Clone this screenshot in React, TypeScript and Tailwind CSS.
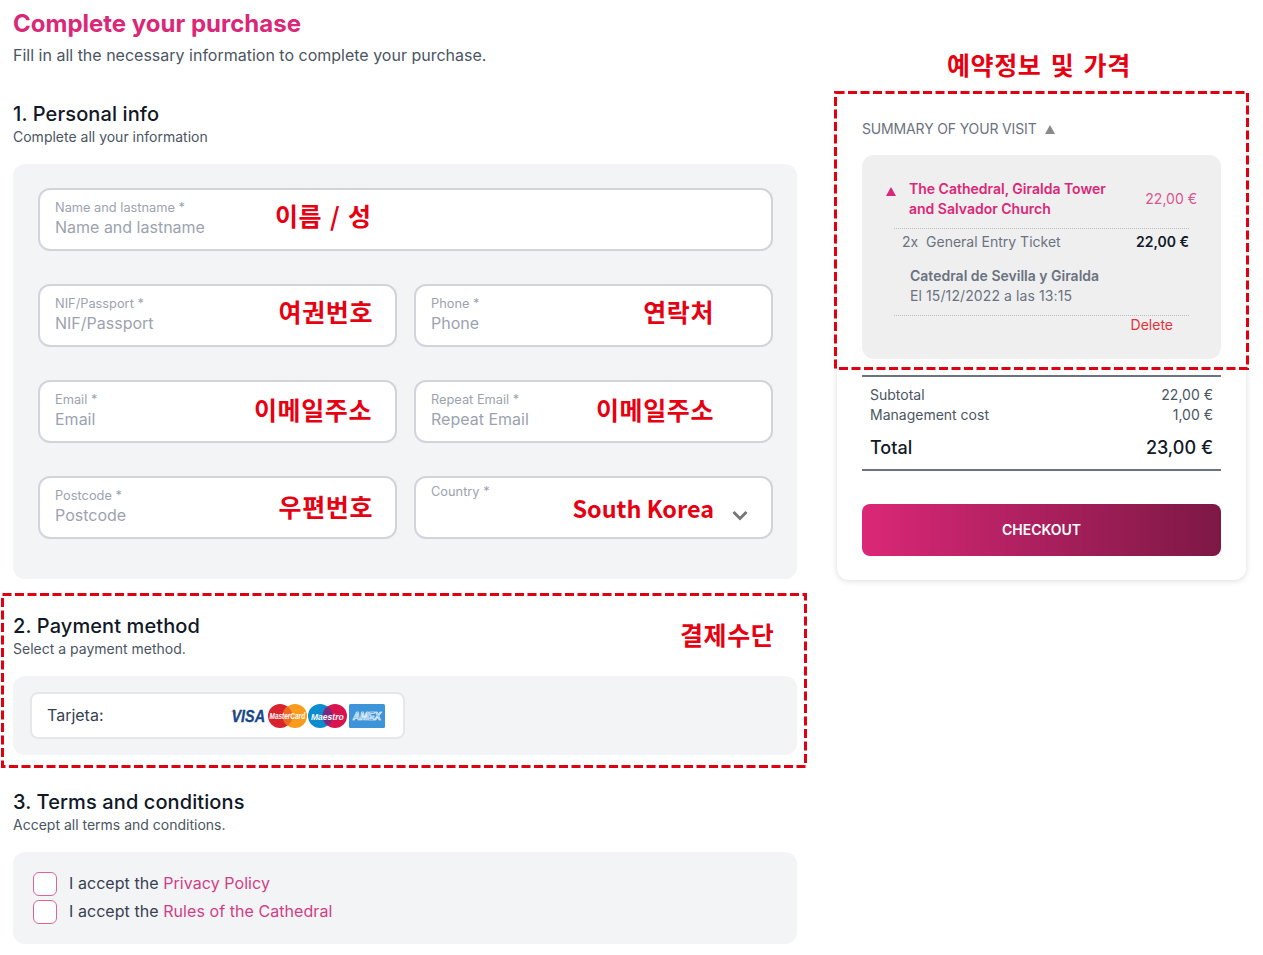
// Checkout page with the red review notes laid over it
const sans = 'font-["Inter","Noto_Sans_CJK_KR",sans-serif]'

function Note({ children, className }: { children: React.ReactNode; className: string }) {
  return (
    <span className={`absolute font-["Noto_Sans_CJK_KR",sans-serif] font-bold text-[#e60012] text-[25px] leading-[32px] tracking-[0.6px] whitespace-nowrap ${className}`}>
      {children}
    </span>
  )
}

function Field({ label, note, noteClass, className = '' }: { label: string; note: string; noteClass: string; className?: string }) {
  return (
    <div className={`relative h-[63px] bg-white border-2 border-[#d1d5db] rounded-xl px-[15px] pt-[9px] ${className}`}>
      <p className="text-[12.8px] leading-[17px] text-[#9ca3af]">{label} *</p>
      <p className="text-base leading-[22px] text-[#9ca3af]">{label}</p>
      <Note className={noteClass}>{note}</Note>
    </div>
  )
}

function CardLogos() {
  return (
    <div className="flex items-center">
      <svg width="36" height="24" viewBox="0 0 36 24">
        <path d="M0 7c3 .5 5 2 6.500 4.500l-1-4.500z" fill="#f7a823" />
        <text transform="translate(1.500 18) scale(0.9 1)" fontFamily="Liberation Sans" fontWeight="700" fontStyle="italic" fontSize="16" fill="#17478a" stroke="#17478a" strokeWidth="0.300">VISA</text>
      </svg>
      <svg width="39" height="24" viewBox="0 0 39 24" className="ml-[2px]">
        <circle cx="12" cy="12" r="12" fill="#d9232e" />
        <circle cx="27" cy="12" r="12" fill="#f99b1c" />
        <path d="M19.500 2.300a12 12 0 0 1 0 19.400a12 12 0 0 1 0-19.400z" fill="#ee6a23" />
        <text transform="translate(1.500 15) scale(0.72 1)" fontFamily="Liberation Sans" fontWeight="700" fontStyle="italic" fontSize="9" fill="#fff">MasterCard</text>
      </svg>
      <svg width="39" height="24" viewBox="0 0 39 24" className="ml-[1px]">
        <circle cx="12" cy="12" r="12" fill="#0b8ccf" />
        <circle cx="27" cy="12" r="12" fill="#d8144f" />
        <path d="M19.500 2.300a12 12 0 0 1 0 19.400a12 12 0 0 1 0-19.400z" fill="#7a2a7e" />
        <text transform="translate(3 15.500) scale(0.9 1)" fontFamily="Liberation Sans" fontWeight="700" fontStyle="italic" fontSize="9.500" fill="#fff">Maestro</text>
      </svg>
      <svg width="36" height="24" viewBox="0 0 36 24" className="ml-[2px]">
        <rect width="36" height="24" rx="1.500" fill="#3d94d8" />
        <text transform="translate(4 16) scale(0.88 1)" fontFamily="Liberation Sans" fontWeight="700" fontStyle="italic" fontSize="11" fill="#3d94d8" stroke="#fff" strokeWidth="0.700">AMEX</text>
      </svg>
    </div>
  )
}

function Heading({ title, sub }: { title: string; sub: string }) {
  return (
    <>
      <h2 className="mt-[33px] text-xl leading-7 font-medium tracking-[0.1px] text-[#111827]">{title}</h2>
      <p className="text-sm leading-5 text-[#4b5563] -mt-px">{sub}</p>
    </>
  )
}

function Check({ link }: { link: string }) {
  return (
    <div className="flex items-center h-6 gap-3">
      <span className="w-6 h-6 bg-white border border-[#d9669b] rounded-md" />
      <p className="text-base leading-6 tracking-[0.06px] text-[#374151] -mt-0.5">
        I accept the <span className="text-[#d03f85]">{link}</span>
      </p>
    </div>
  )
}

function Summary() {
  return (
    <div className="w-[409px] h-[488px] bg-white rounded-xl shadow-[0_1px_6px_rgba(0,0,0,0.14)] px-[25px] pt-[27px]">
      <div className="flex items-center gap-2 h-5">
        <p className="text-sm leading-5 tracking-[-0.15px] text-[#6b7280]">SUMMARY OF YOUR VISIT</p>
        <span className="w-0 h-0 border-x-[5px] border-x-transparent border-b-[9px] border-b-[#8a8a8a]" />
      </div>
      <div className="mt-4 h-[204px] bg-[#efeff0] rounded-xl px-[32px] pt-6">
        <div className="relative flex items-center justify-between pl-[15px] h-[40px] -mr-[8px]">
          <span className="absolute -left-[8px] top-[8px] w-0 h-0 border-x-[5px] border-x-transparent border-b-[9px] border-b-[#db2777]" />
          <p className="text-sm leading-5 font-semibold text-[#db2777]">
            The Cathedral, Giralda Tower
            <br />
            and Salvador Church
          </p>
          <p className="text-sm leading-5 text-[#d9558f]">22,00 €</p>
        </div>
        <div className="mt-[9px] border-t border-dotted border-[#b9bcc2] flex justify-between h-[27px] items-center pl-[8px]">
          <p className="text-sm text-[#6b7280]">2x&nbsp; General Entry Ticket</p>
          <p className="text-sm font-semibold text-[#111827]">22,00 €</p>
        </div>
        <p className="mt-[11px] pl-[16px] text-sm leading-5 font-semibold text-[#6b7280]">Catedral de Sevilla y Giralda</p>
        <p className="pl-[16px] text-sm leading-5 tracking-[0.1px] text-[#6b7280]">El 15/12/2022 a las 13:15</p>
        <div className="mt-[9px] border-t border-dotted border-[#b9bcc2] flex justify-end pr-4">
          <p className="text-sm leading-5 text-[#e0323c] -mt-px">Delete</p>
        </div>
      </div>
      <div className="mt-4 border-y-2 border-[#6b7280] h-[96px] px-2 pt-2">
        <div className="flex justify-between text-sm leading-5 text-[#4b5563]">
          <p>Subtotal</p>
          <p>22,00 €</p>
        </div>
        <div className="flex justify-between text-sm leading-5 text-[#4b5563]">
          <p>Management cost</p>
          <p>1,00 €</p>
        </div>
        <div className="mt-[9px] flex justify-between text-lg leading-7 font-medium text-[#111827]">
          <p>Total</p>
          <p>23,00 €</p>
        </div>
      </div>
      <button className="mt-[33px] w-full h-[52px] rounded-lg bg-gradient-to-r from-[#db2777] to-[#7d1845] text-sm font-semibold text-white">
        CHECKOUT
      </button>
    </div>
  )
}

function DashedBox({ className, w, h }: { className: string; w: number; h: number }) {
  return (
    <svg className={`absolute ${className}`} width={w} height={h} fill="none">
      <rect x="1.500" y="1.500" width={w - 3} height={h - 3} stroke="#df0011" strokeWidth="3" strokeDasharray="9 3.500" />
    </svg>
  )
}

export default function App() {
  return (
    <div className={`relative min-h-[955px] bg-white flex items-start gap-10 pl-[13px] pt-2 ${sans}`}>
      <main className="w-[784px] shrink-0">
        <h1 className="text-2xl leading-8 font-bold text-[#db2777]">Complete your purchase</h1>
        <p className="mt-[3px] text-base leading-6 text-[#4b5563]">Fill in all the necessary information to complete your purchase.</p>

        <Heading title="1. Personal info" sub="Complete all your information" />
        <section className="mt-[17px] h-[415px] bg-[#f3f4f6] rounded-xl pl-[25px] pr-6 pt-6 grid grid-cols-2 gap-x-[17px] gap-y-[33px] content-start">
          <Field className="col-span-2" label="Name and lastname" note="이름 / 성" noteClass="left-[235px] top-[9px] [word-spacing:1.5px]" />
          <Field label="NIF/Passport" note="여권번호" noteClass="right-[22px] top-[9px]" />
          <Field label="Phone" note="연락처" noteClass="right-[57px] top-[9px]" />
          <Field label="Email" note="이메일주소" noteClass="right-[23px] top-[11px]" />
          <Field label="Repeat Email" note="이메일주소" noteClass="right-[57px] top-[11px]" />
          <Field label="Postcode" note="우편번호" noteClass="right-[22px] top-[12px]" />
          <div className="relative h-[63px] bg-white border-2 border-[#d1d5db] rounded-xl px-[15px] pt-[5px]">
            <p className="text-[12.8px] leading-[17px] text-[#9ca3af]">Country *</p>
            <Note className="right-[57px] top-[13px]">
              <span className="text-[23.4px] tracking-normal">South Korea</span>
            </Note>
            <svg className="absolute right-[23px] top-[32px]" width="16" height="11" viewBox="0 0 16 11" fill="none">
              <path d="M1.500 2l6.500 6.500 6.500-6.500" stroke="#777" strokeWidth="3" />
            </svg>
          </div>
        </section>

        <Heading title="2. Payment method" sub="Select a payment method." />
        <section className="mt-[17px] h-[79px] bg-[#f3f4f6] rounded-xl pl-[17px] pt-4">
          <div className="w-[375px] h-[47px] bg-white border-2 border-[#e5e7eb] rounded-lg flex items-center justify-between pl-[15px] pr-[18px]">
            <span className="text-base text-[#374151] -mt-0.5">Tarjeta:</span>
            <CardLogos />
          </div>
        </section>

        <Heading title="3. Terms and conditions" sub="Accept all terms and conditions." />
        <section className="mt-[17px] h-[92px] bg-[#f3f4f6] rounded-xl pl-5 pt-5 flex flex-col gap-1">
          <Check link="Privacy Policy" />
          <Check link="Rules of the Cathedral" />
        </section>
      </main>

      <aside className="pt-[84px]">
        <Summary />
      </aside>

      <Note className="left-[947px] top-[48px] [word-spacing:3px]">예약정보 및 가격</Note>
      <Note className="left-[680px] top-[618px]">결제수단</Note>
      <DashedBox className="left-[834px] top-[91px]" w={415} h={279} />
      <DashedBox className="left-[1px] top-[593px]" w={806} h={175} />
    </div>
  )
}
